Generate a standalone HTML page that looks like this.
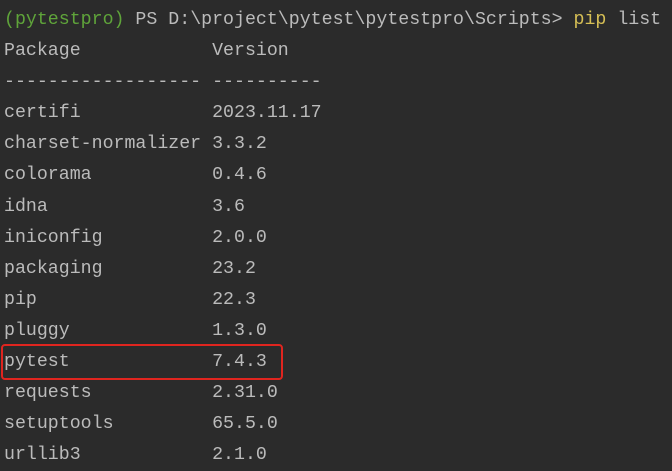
<!DOCTYPE html>
<html><head><meta charset="utf-8"><style>
html,body{margin:0;padding:0;background:#2b2b2b;width:672px;height:471px;overflow:hidden;}
pre{margin:0;padding:5px 0 0 4px;font-family:"Liberation Mono",monospace;font-size:18.25px;line-height:31.1px;color:#bbbbbb;white-space:pre;}
.g{color:#5fa43a}.y{color:#d6bf55}
.box{position:absolute;left:1px;top:344px;width:278px;height:32px;border:2px solid #e0251f;border-radius:4px;}
</style></head><body>
<pre><span class="g">(pytestpro)</span> PS D:\project\pytest\pytestpro\Scripts&gt; <span class="y">pip</span> list
Package            Version
------------------ ----------
certifi            2023.11.17
charset-normalizer 3.3.2
colorama           0.4.6
idna               3.6
iniconfig          2.0.0
packaging          23.2
pip                22.3
pluggy             1.3.0
pytest             7.4.3
requests           2.31.0
setuptools         65.5.0
urllib3            2.1.0</pre>
<div class="box"></div>
</body></html>
